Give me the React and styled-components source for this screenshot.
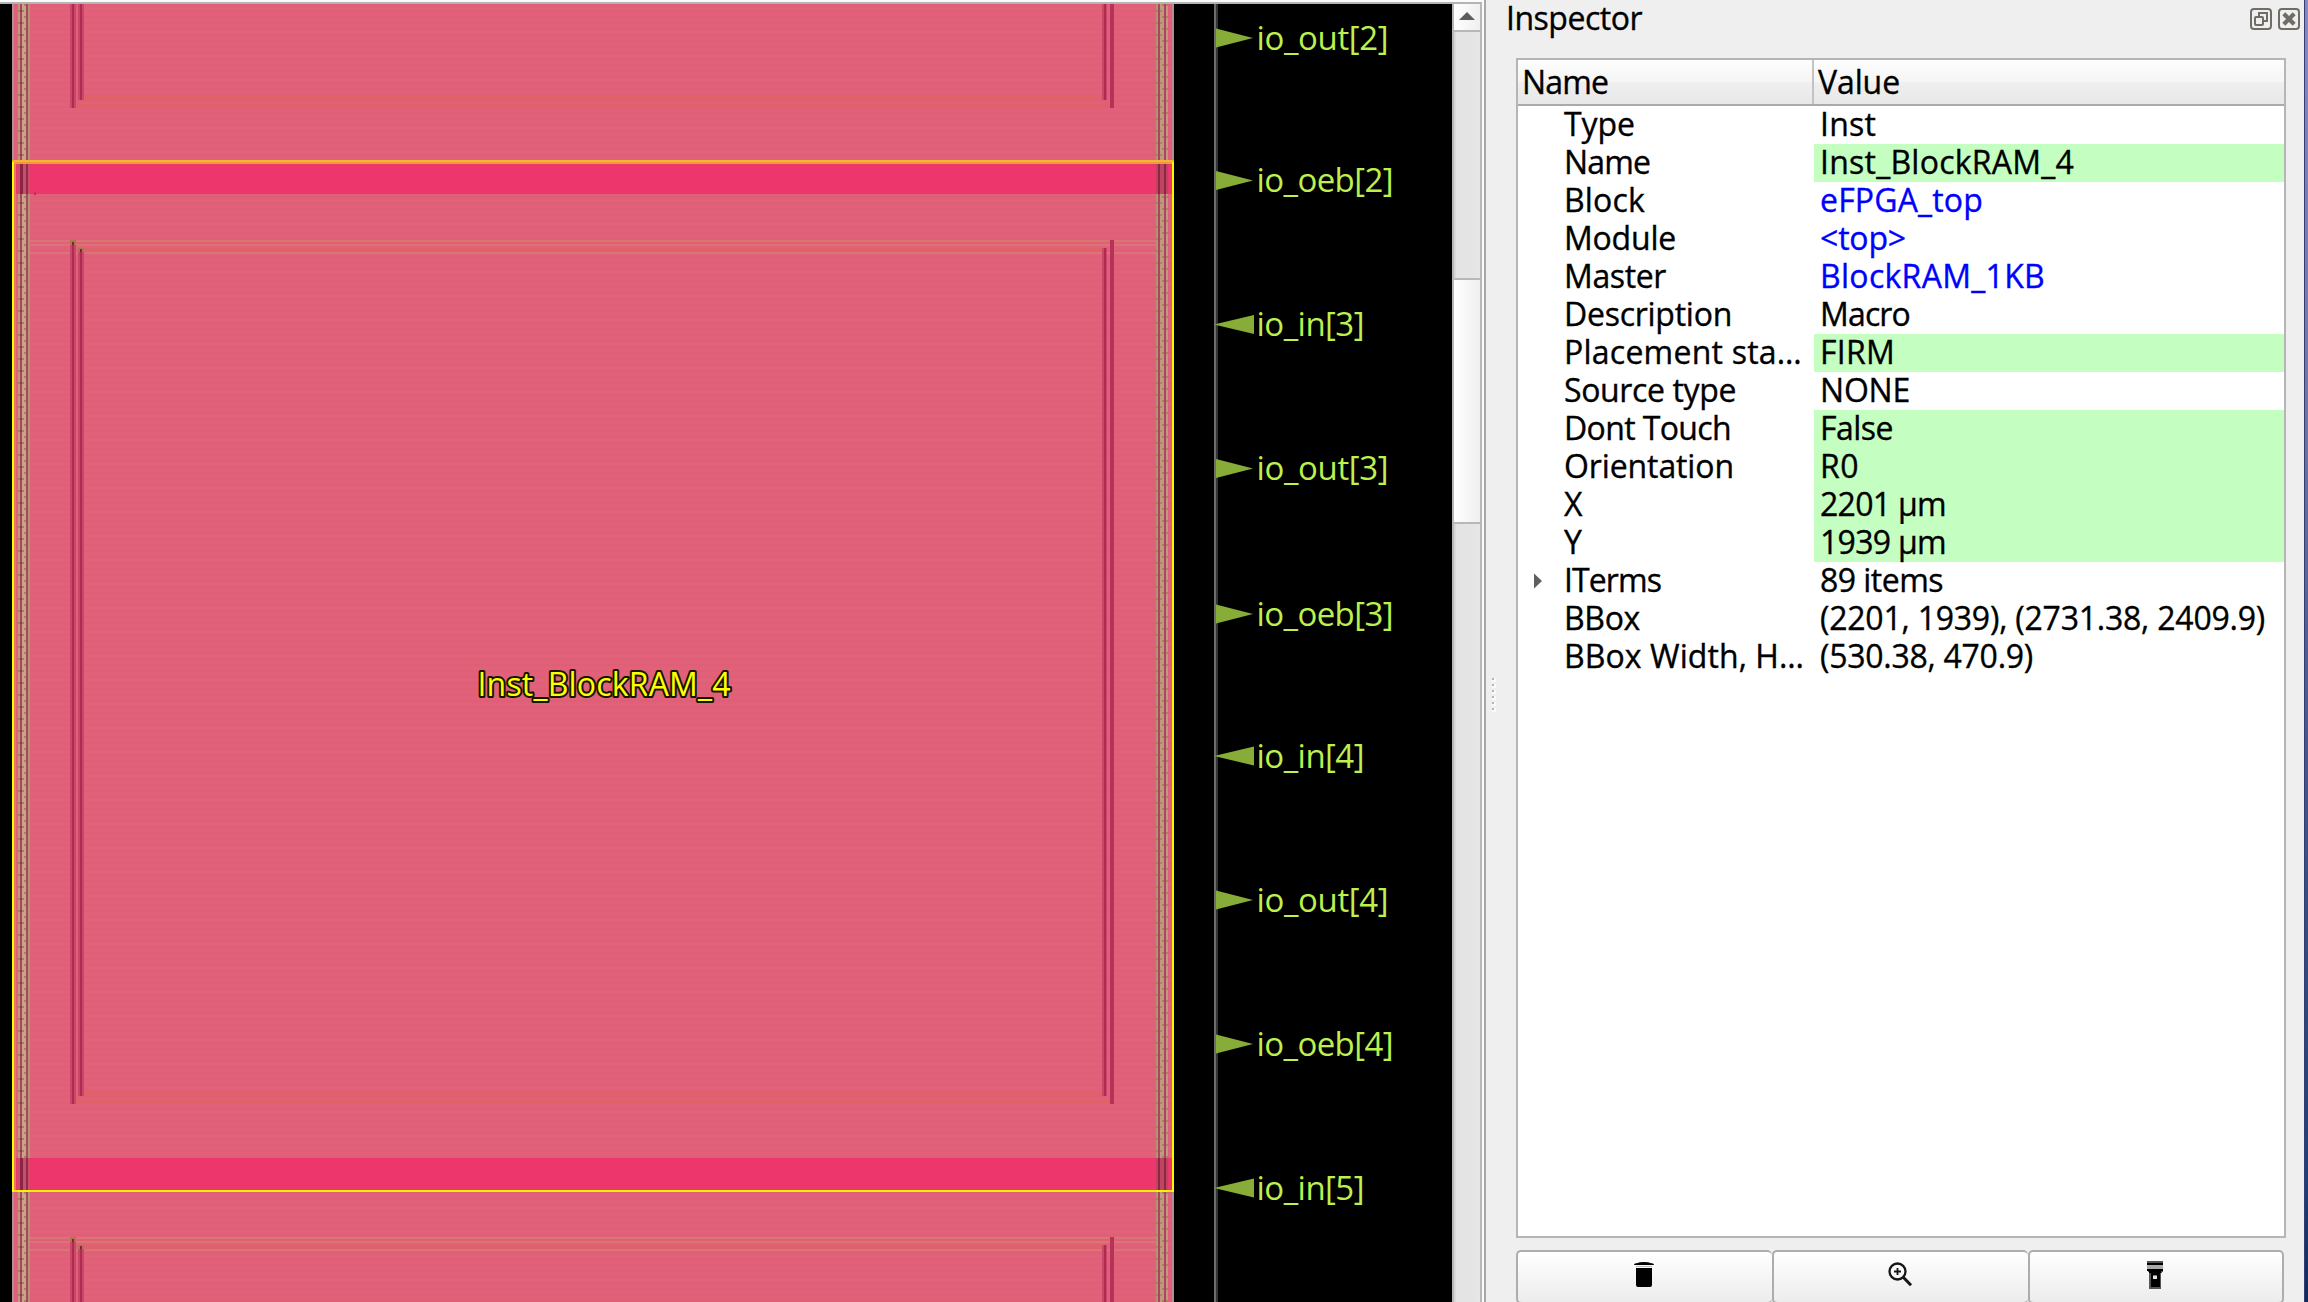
import React, { useLayoutEffect, useRef, useState } from "react";
import styled, { createGlobalStyle } from "styled-components";

const GlobalStyle = createGlobalStyle`
  * { box-sizing: border-box; }
  html, body { margin: 0; padding: 0; overflow: hidden; background: #efefef; }
`;

const Window = styled.div`
  display: flex;
  width: 2308px;
  height: 1302px;
  overflow: hidden;
  background: #efefef;
  color: #000;
  font-family: "Open Sans", "Noto Sans", sans-serif;
  font-size: 32px;
  line-height: 35px;
  -webkit-text-stroke: 0.35px currentColor;
`;

/* ---------- layout view ---------- */

const Viewer = styled.section`
  display: flex;
  width: 1484px;
  height: 100%;
  flex: none;
  padding-top: 2px;
  background: #fbfbfb;
`;

const ViewerFrame = styled.div`
  display: flex;
  width: 1482px;
  height: 1300px;
  border-top: 2px solid #b4b4b4;
  border-right: 2px solid #b8b8b8;
`;

const Canvas = styled.svg`
  display: block;
  flex: none;
  width: 1452px;
  height: 1298px;
  background: #000;
`;

const PinLabel = styled.text`
  font-family: "Open Sans", "Noto Sans", sans-serif;
  font-size: 33px;
  fill: #bdf04d;
  -webkit-text-stroke: 0;
`;

const InstanceLabel = styled.text`
  font-family: "Open Sans", "Noto Sans", sans-serif;
  font-size: 32px;
  fill: #ffff00;
  stroke: #151500;
  stroke-width: 4px;
  stroke-linejoin: round;
  paint-order: stroke;
`;

const ScrollBar = styled.div`
  display: flex;
  flex-direction: column;
  width: 28px;
  border-left: 2px solid #b8b8b8;
  background: linear-gradient(90deg, #d8d8d8 0 2px, #e4e4e4 2px 18px, #e7e7e7);
`;

const ScrollArrow = styled.div`
  display: flex;
  align-items: center;
  justify-content: center;
  height: 28px;
  padding-bottom: 2px;
  border-bottom: 2px solid #b8b8b8;
  background: linear-gradient(90deg, #fff, #efefef);
`;

const ScrollTrack = styled.div`
  height: 246px;
`;

const ScrollThumb = styled.div`
  height: 246px;
  border-top: 2px solid #b8b8b8;
  border-bottom: 2px solid #b8b8b8;
  background: linear-gradient(90deg, #fff, #efefef);
`;

/* ---------- inspector ---------- */

const Splitter = styled.div`
  display: flex;
  flex-direction: column;
  width: 16px;
  flex: none;
  padding: 678px 0 0 6px;
  gap: 2px;
  border-left: 2px solid #a8a8a8;
`;

const GripDot = styled.span`
  width: 4px;
  height: 4px;
  background: linear-gradient(#b4b4b4, #b4b4b4) 0 0 / 2px 2px no-repeat, #fafafa;
`;

const Inspector = styled.aside`
  display: flex;
  flex-direction: column;
  width: 804px;
  flex: none;
  padding: 0 4px 0 16px;
`;

const TitleBar = styled.header`
  display: flex;
  align-items: flex-start;
  justify-content: space-between;
  height: 58px;
  flex: none;
  margin-left: -10px;
`;

const DockButtons = styled.div`
  display: flex;
  gap: 6px;
  padding-top: 8px;
`;

const Table = styled.div`
  width: 770px;
  height: 1180px;
  flex: none;
  border: 2px solid #b5b5b5;
  background: #fff;
`;

const TableHead = styled.div`
  display: flex;
  height: 46px;
  border-bottom: 2px solid #aaa;
  background: linear-gradient(#fdfdfd, #f5f5f5 50%, #efefef 51%, #e8e8e8);
`;

const HeadCell = styled.div`
  width: ${(p) => p.$width || "auto"};
  padding: 4px 0 0 4px;
  border-right: ${(p) => (p.$divider ? "2px solid #c3c3c3" : "0")};
`;

const Row = styled.div`
  display: flex;
  height: 38px;
`;

const NameCell = styled.div`
  display: flex;
  width: 296px;
  flex: none;
`;

const Expander = styled.div`
  display: flex;
  align-items: center;
  width: 46px;
  padding-left: 16px;
  flex: none;
`;

const ValueCell = styled.div`
  flex: 1;
  padding-left: 6px;
  color: ${(p) => (p.$link ? "#0000ff" : "#000")};
  background: ${(p) => (p.$editable ? "#c4ffc1" : "transparent")};
`;

const Actions = styled.div`
  display: flex;
  width: 768px;
  flex: none;
  margin-top: 12px;
`;

const ActionButton = styled.button`
  display: flex;
  justify-content: center;
  width: ${(p) => p.$width}px;
  height: 54px;
  margin: 0;
  padding: 8px 2px 0 0;
  border: 2px solid #adadad;
  border-right-width: ${(p) => (p.$last ? "2px" : "0")};
  border-radius: 5px;
  background: linear-gradient(#fff, #ececec);
`;

const DesktopEdge = styled.div`
  width: 4px;
  flex: none;
  border-left: 1px solid #333d70;
  background: linear-gradient(#8888c8 0, #8080bd 140px, #7077a8 400px, #535f94 640px, #344f80 900px, #17427a 1180px, #0b2c5c);
`;

const TextRun = styled.span`
  display: inline-block;
  white-space: pre;
`;

/* Spreads the tracking of a label so that it fills a fixed advance width. */
function Label({ width, children }) {
  const ref = useRef(null);
  const [spacing, setSpacing] = useState(0);
  useLayoutEffect(() => {
    const natural = ref.current.getBoundingClientRect().width;
    setSpacing((width - natural) / children.length);
  }, []);
  return (
    <TextRun ref={ref} style={{ letterSpacing: `${spacing}px` }}>
      {children}
    </TextRun>
  );
}

const pins = [
  { name: "io_out[2]", y: 38 },
  { name: "io_oeb[2]", y: 180.5 },
  { name: "io_in[3]", y: 324.5, input: true },
  { name: "io_out[3]", y: 468.5 },
  { name: "io_oeb[3]", y: 614 },
  { name: "io_in[4]", y: 756, input: true },
  { name: "io_out[4]", y: 900 },
  { name: "io_oeb[4]", y: 1044 },
  { name: "io_in[5]", y: 1188, input: true },
];

const pinWidth = (name) =>
  name.startsWith("io_in") ? 108 : name.startsWith("io_out") ? 132 : 137;

function Pin({ name, y, input }) {
  const points = input
    ? `1214,${y} 1254,${y - 9.5} 1254,${y + 9.5}`
    : `1253,${y} 1216,${y - 9.5} 1216,${y + 9.5}`;
  return (
    <g>
      <polygon points={points} fill="#87ac37" />
      <PinLabel x="1256.5" y={Math.floor(y) + 12} textLength={pinWidth(name)}>
        {name}
      </PinLabel>
    </g>
  );
}

/* Pair of supply rails on each side of a macro, with their top and bottom straps. */
function Rails({ top, bottom, straps }) {
  const inTop = top + 8;
  const inBottom = bottom - 8;
  return (
    <g shapeRendering="crispEdges">
      {straps && (
        <>
          <rect x="76" y={top + 2} width="1034" height="3" fill="#e06268" />
          <rect x="84" y={inTop} width="1018" height="4" fill="#e06268" />
          <rect x="30" y={top} width="1126" height="2" fill="#d97579" />
          <rect x="30" y={top + 4} width="1126" height="2" fill="#d97579" />
          <rect x="30" y={inTop + 4} width="1126" height="2" fill="#d97579" />
        </>
      )}
      <rect x="84" y={inBottom - 4} width="1018" height="4" fill="#e06268" />
      <rect x="76" y={bottom - 4} width="1034" height="4" fill="#e06268" />
      <rect x="70" y={top} width="6" height={bottom - top} fill="#cb4767" />
      <rect x="72" y={top} width="2" height={bottom - top} fill="#b02b54" />
      <rect x="78" y={inTop} width="6" height={inBottom - inTop} fill="#cb4767" />
      <rect x="80" y={inTop} width="2" height={inBottom - inTop} fill="#b02b54" />
      <rect x="1102" y={inTop} width="5" height={inBottom - inTop} fill="#cb4767" />
      <rect x="1104" y={inTop} width="2" height={inBottom - inTop} fill="#b02b54" />
      <rect x="1110" y={top} width="4" height={bottom - top} fill="#b7315a" />
      {straps && (
        <>
          <rect x="70" y={top} width="6" height="5" fill="#a97750" />
          <rect x="72" y={top + 2} width="2" height="3" fill="#8a2038" />
          <rect x="78" y={inTop} width="6" height="4" fill="#a97750" />
          <rect x="80" y={inTop + 1} width="2" height="3" fill="#8a2038" />
        </>
      )}
    </g>
  );
}

function LayoutCanvas() {
  return (
    <Canvas viewBox="0 4 1452 1298">
      <defs>
        <pattern id="rows" width="8" height="6" patternUnits="userSpaceOnUse">
          <rect width="8" height="6" fill="#e2617a" />
          <rect y="4" width="8" height="2" fill="#df6076" />
        </pattern>
        <pattern id="edge" x="18" y="10" width="12" height="12" patternUnits="userSpaceOnUse">
          <rect width="12" height="12" fill="#c59682" />
          <rect x="4" width="4" height="12" fill="#cba28b" />
          <rect y="0" width="6" height="2" fill="#9d8a55" />
          <rect x="6" y="6" width="6" height="2" fill="#9d8a55" />
          <rect x="2" width="2" height="12" fill="#a9475f" />
          <rect x="8" width="2" height="12" fill="#a9475f" />
          <rect x="10" width="2" height="12" fill="#b39471" />
          <rect x="2" y="0" width="2" height="2" fill="#874147" />
        </pattern>
        <pattern id="edgeRight" x="1156" y="10" width="12" height="12" patternUnits="userSpaceOnUse">
          <rect width="12" height="12" fill="#c59682" />
          <rect width="2" height="12" fill="#b39471" />
          <rect y="0" width="6" height="2" fill="#9d8a55" />
          <rect x="6" y="6" width="6" height="2" fill="#9d8a55" />
          <rect x="2" width="2" height="12" fill="#a9475f" />
          <rect x="8" width="2" height="12" fill="#a9475f" />
        </pattern>
      </defs>

      <g shapeRendering="crispEdges">
        <rect x="12" y="4" width="1162" height="1298" fill="url(#rows)" />
        <rect x="12" y="4" width="2" height="1298" fill="#b18e91" />
        <rect x="1172" y="4" width="2" height="1298" fill="#b18e91" />
        <rect x="18" y="4" width="12" height="1298" fill="url(#edge)" />
        <rect x="1156" y="4" width="12" height="1298" fill="url(#edgeRight)" />
      </g>

      <Rails top={-200} bottom={108} />
      <Rails top={240} bottom={1104} straps />
      <Rails top={1237} bottom={2000} straps />

      <g shapeRendering="crispEdges">
        {[
          { y: 164, h: 30 },
          { y: 1158, h: 32 },
        ].map((band) => (
          <g key={band.y}>
            <rect x="14" y={band.y} width="1158" height={band.h} fill="#ed366c" />
            <rect x="18" y={band.y} width="12" height={band.h} fill="#c4506a" />
            <rect x="20" y={band.y} width="3" height={band.h} fill="#8e2348" />
            <rect x="26" y={band.y} width="2" height={band.h} fill="#982949" />
            <rect x="1156" y={band.y} width="12" height={band.h} fill="#bd4560" />
            <rect x="1158" y={band.y} width="2" height={band.h} fill="#912348" />
            <rect x="1164" y={band.y} width="2" height={band.h} fill="#912348" />
          </g>
        ))}
        <rect x="34" y="192" width="2" height="3" fill="#bd3259" />
        <rect x="14" y="164" width="2" height="1026" fill="#e97a62" />
        <rect x="12" y="160" width="1162" height="2" fill="#f2b635" />
        <rect x="14" y="162" width="1158" height="2" fill="#f2983f" />
        <rect x="12" y="1190" width="1162" height="2" fill="#fdf005" />
        <rect x="12" y="162" width="2" height="1030" fill="#fffa00" />
        <rect x="1172" y="162" width="2" height="1030" fill="#fffa00" />
        <rect x="1214" y="4" width="2" height="1298" fill="#6c6c6c" />
        <rect x="1216" y="4" width="2" height="1298" fill="#343434" />
      </g>

      {pins.map((pin) => (
        <Pin key={pin.name} {...pin} />
      ))}
      <InstanceLabel x="477.500" y="696" textLength="253">
        Inst_BlockRAM_4
      </InstanceLabel>
    </Canvas>
  );
}

const properties = [
  { name: "Type", nw: 71, value: "Inst", vw: 56 },
  { name: "Name", nw: 86, value: "Inst_BlockRAM_4", vw: 254, editable: true },
  { name: "Block", nw: 81, value: "eFPGA_top", vw: 163, link: true },
  { name: "Module", nw: 112, value: "<top>", vw: 86, link: true },
  { name: "Master", nw: 102, value: "BlockRAM_1KB", vw: 225, link: true },
  { name: "Description", nw: 168, value: "Macro", vw: 90 },
  { name: "Placement sta…", nw: 238, value: "FIRM", vw: 75, editable: true },
  { name: "Source type", nw: 172, value: "NONE", vw: 90 },
  { name: "Dont Touch", nw: 167, value: "False", vw: 73, editable: true },
  { name: "Orientation", nw: 170, value: "R0", vw: 39, editable: true },
  { name: "X", nw: 21, value: "2201 µm", vw: 126, editable: true },
  { name: "Y", nw: 20, value: "1939 µm", vw: 126, editable: true },
  { name: "ITerms", nw: 97, value: "89 items", vw: 123, expandable: true },
  { name: "BBox", nw: 76, value: "(2201, 1939), (2731.38, 2409.9)", vw: 445 },
  { name: "BBox Width, H…", nw: 240, value: "(530.38, 470.9)", vw: 213 },
];

function PropertyRow({ name, nw, value, vw, editable, link, expandable }) {
  return (
    <Row>
      <NameCell>
        <Expander>
          {expandable && (
            <svg width="8" height="16" viewBox="0 0 8 16">
              <path d="M0 .5 8 8 0 15.5Z" fill="#5f5f5f" />
            </svg>
          )}
        </Expander>
        <Label width={nw}>{name}</Label>
      </NameCell>
      <ValueCell $editable={editable} $link={link}>
        <Label width={vw}>{value}</Label>
      </ValueCell>
    </Row>
  );
}

const FloatIcon = () => (
  <svg width="22" height="22" viewBox="0 0 22 22" fill="none" stroke="#706d66" strokeWidth="2">
    <rect x="1" y="1" width="20" height="20" rx="3" />
    <path d="M9 8V5h8v8h-3" />
    <rect x="5" y="9" width="8" height="8" rx="1" />
  </svg>
);

const CloseIcon = () => (
  <svg width="22" height="22" viewBox="0 0 22 22" fill="none" stroke="#706d66" strokeWidth="2">
    <rect x="1" y="1" width="20" height="20" rx="3" />
    <path d="M5.8 5.8 16.2 16.2M16.2 5.8 5.8 16.2" strokeWidth="4.2" />
  </svg>
);

const TrashIcon = () => (
  <svg width="32" height="32" viewBox="0 0 32 32">
    <path d="M6 5Q6 3 10 3Q11 2 16 2Q21 2 22 3Q26 3 26 5Z" />
    <path d="M8 8H24V25Q24 27 22 27H10Q8 27 8 25Z" />
    <path d="M8 6H24V7H8Z" fill="#bbb" />
  </svg>
);

const ZoomIcon = () => (
  <svg width="32" height="32" viewBox="0 0 32 32" fill="none" stroke="#161616">
    <circle cx="13.5" cy="11.5" r="8" strokeWidth="2.3" />
    <path d="M19 17 27 25.2" strokeWidth="3" />
    <path d="M10 11.5h7M13.5 8v7" strokeWidth="1.8" />
  </svg>
);

const FlashlightIcon = () => (
  <svg width="32" height="32" viewBox="0 0 32 32" shapeRendering="crispEdges">
    <rect x="8" y="1" width="16" height="2" fill="#555" />
    <rect x="8" y="3" width="16" height="2" />
    <rect x="8" y="5" width="16" height="4" fill="#aaa" />
    <path d="M8 9H24V11L22 13V29H10V13L8 11Z" fill="#555" />
    <path d="M8 9H24V11H22V13H20.500V27H11.500V13H10V11H8Z" />
    <rect x="14" y="15" width="4" height="4" fill="#e2e2e2" />
    <rect x="14" y="15" width="4" height="1" fill="#777" />
  </svg>
);

export default function App() {
  return (
    <Window>
      <GlobalStyle />
      <Viewer>
        <ViewerFrame>
          <LayoutCanvas />
          <ScrollBar>
            <ScrollArrow>
              <svg width="16" height="8" viewBox="0 0 16 8">
                <path d="M8 0 16 8H0Z" fill="#5d5d5d" />
              </svg>
            </ScrollArrow>
            <ScrollTrack />
            <ScrollThumb />
          </ScrollBar>
        </ViewerFrame>
      </Viewer>
      <Splitter>
        {[0, 1, 2, 3, 4, 5].map((i) => (
          <GripDot key={i} />
        ))}
      </Splitter>
      <Inspector>
        <TitleBar>
          <Label width={136}>Inspector</Label>
          <DockButtons>
            <FloatIcon />
            <CloseIcon />
          </DockButtons>
        </TitleBar>
        <Table>
          <TableHead>
            <HeadCell $width="296px" $divider>
              <Label width={86}>Name</Label>
            </HeadCell>
            <HeadCell>
              <Label width={82}>Value</Label>
            </HeadCell>
          </TableHead>
          {properties.map((property) => (
            <PropertyRow key={property.name} {...property} />
          ))}
        </Table>
        <Actions>
          <ActionButton $width={256} aria-label="Delete">
            <TrashIcon />
          </ActionButton>
          <ActionButton $width={256} aria-label="Zoom to">
            <ZoomIcon />
          </ActionButton>
          <ActionButton $width={256} $last aria-label="Highlight">
            <FlashlightIcon />
          </ActionButton>
        </Actions>
      </Inspector>
      <DesktopEdge />
    </Window>
  );
}
